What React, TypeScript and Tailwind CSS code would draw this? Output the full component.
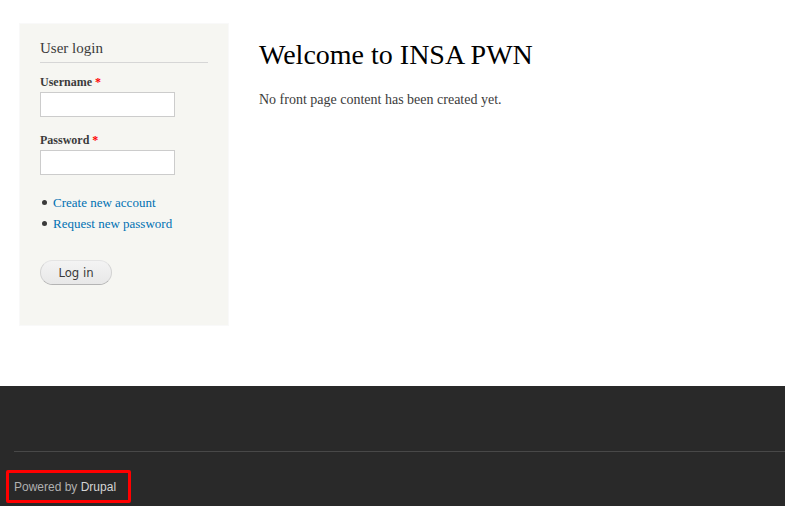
function TextField({ id, label, type }: { id: string; label: string; type: string }) {
  return (
    <div>
      <label htmlFor={id} className="block text-[12px] leading-5 font-bold">
        {label} <span className="text-[#ff0000]">*</span>
      </label>
      <input
        id={id}
        type={type}
        required
        className="block h-[25px] w-[135px] border border-[#cccccc] bg-white px-1 text-[12px] outline-none"
      />
    </div>
  );
}

function LinkItem({ href, label }: { href: string; label: string }) {
  return (
    <li className="flex items-center gap-[6px] before:size-[5px] before:rounded-full before:bg-[#3b3b3b]">
      <a href={href} className="text-[#0071b3]">{label}</a>
    </li>
  );
}

function LoginBlock() {
  return (
    <aside className="w-[210px] shrink-0 border border-[#f9f9f9] bg-[#f6f6f2] px-5 pt-[14px] pb-10">
      <h2 className="border-b border-[#d6d6d6] pb-1 text-[15px] leading-5">User login</h2>
      <form className="pt-[9px]" onSubmit={(e) => e.preventDefault()}>
        <div className="flex flex-col gap-[13px]">
          <TextField id="name" label="Username" type="text" />
          <TextField id="pass" label="Password" type="password" />
        </div>
        <ul className="mt-[17px] pl-[2px] text-[13px] leading-[21px]">
          <LinkItem href="#register" label="Create new account" />
          <LinkItem href="#password" label="Request new password" />
        </ul>
        <button
          type="submit"
          className="mt-[26px] h-[25px] w-[72px] rounded-full border border-[#e4e4e4] border-x-[#d2d2d2] border-b-[#b4b4b4] bg-linear-to-b from-[#f3f3f3] to-[#e8e8e8] font-['DejaVu_Sans_Condensed','DejaVu_Sans',sans-serif] text-[13px] leading-5 text-[#3a3a3a]"
        >
          Log in
        </button>
      </form>
    </aside>
  );
}

export default function App() {
  return (
    <div className="flex min-h-screen flex-col bg-white font-['Liberation_Serif','Times_New_Roman',serif] text-[#3b3b3b]">
      <div className="flex items-start gap-[30px] px-[19px] pt-[23px] pb-[60px]">
        <LoginBlock />
        <main className="min-w-0 flex-1 pt-3">
          <h1 className="text-[28px] leading-10 text-black">Welcome to INSA PWN</h1>
          <p className="mt-[15px] text-[14px] leading-5">No front page content has been created yet.</p>
        </main>
      </div>
      <footer className="flex-1 bg-[#292929] pt-[65px] font-['Liberation_Sans',Arial,sans-serif] text-[12px] leading-5 text-[#b0b0b0]">
        <div className="ml-[14px] border-t border-[#484848] pt-[18px]">
          <div className="-ml-2 inline-block rounded-[2px] border-3 border-[#ff0000] pt-1 pr-3 pb-[3px] pl-[5px]">
            Powered by <a href="#drupal" className="text-[#d4d4d4]">Drupal</a>
          </div>
        </div>
      </footer>
    </div>
  );
}
